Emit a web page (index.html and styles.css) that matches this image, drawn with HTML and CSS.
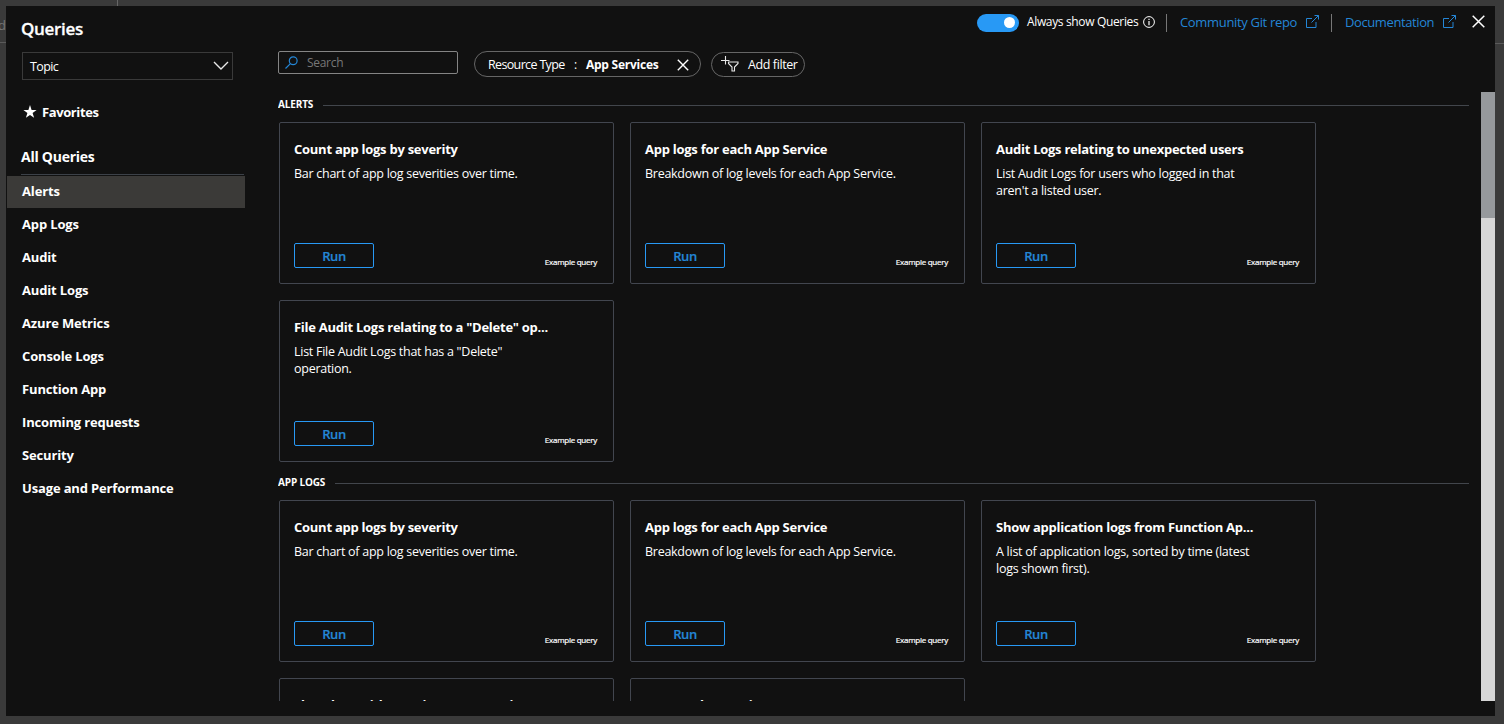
FILE: index.html
```html
<!DOCTYPE html>
<html lang="en">
<head>
<meta charset="utf-8">
<title>Queries</title>
<link rel="stylesheet" href="styles.css">
</head>
<body>
<div class="backdrop"><i class="tab-edge"></i><span class="behind-text">dr</span><i class="behind-line left"></i><i class="behind-line right"></i></div>
<div class="panel">
  <aside class="sidebar">
    <h1 class="title">Queries</h1>
    <div class="select"><span>Topic</span><svg width="16" height="10" viewBox="0 0 16 10"><path d="M1 1l7 7 7-7" fill="none" stroke="#e8e8e8" stroke-width="1.4"/></svg></div>
    <div class="favorites"><svg width="14" height="14" viewBox="0 0 14 14"><path d="M7 0l1.600 4.900h5l-4 3 1.500 4.900L7 9.900l-4.100 2.900 1.500-4.900-4-3h5z" fill="#fff"/></svg><span>Favorites</span></div>
    <h2 class="all">All Queries</h2>
    <nav class="nav">
      <a class="item active">Alerts</a>
      <a class="item">App Logs</a>
      <a class="item">Audit</a>
      <a class="item">Audit Logs</a>
      <a class="item">Azure Metrics</a>
      <a class="item">Console Logs</a>
      <a class="item">Function App</a>
      <a class="item">Incoming requests</a>
      <a class="item">Security</a>
      <a class="item">Usage and Performance</a>
    </nav>
  </aside>
  <main class="main">
    <header class="topbar">
      <span class="toggle"><i></i></span>
      <span class="toggle-label">Always show Queries</span>
      <svg class="info" width="12" height="12" viewBox="0 0 12 12"><circle cx="6" cy="6" r="5.400" fill="none" stroke="#fff"/><path d="M6 2.700v1.200M6 4.900v4.300" stroke="#fff" stroke-width="1.200"/></svg>
      <i class="sep first"></i>
      <a class="link git">Community Git repo</a>
      <svg class="ext" width="13" height="13" viewBox="0 0 13 13"><path d="M6 3.500H.5v9h9.500V7M5.500 7.500l7-7M8.500 .5h4v4" fill="none" stroke="#2486d6"/></svg>
      <i class="sep second"></i>
      <a class="link docs">Documentation</a>
      <svg class="ext" width="13" height="13" viewBox="0 0 13 13"><path d="M6 3.500H.5v9h9.500V7M5.500 7.500l7-7M8.500 .5h4v4" fill="none" stroke="#2486d6"/></svg>
      <svg class="close" width="13" height="13" viewBox="0 0 13 13"><path d="M.7.7l11.600 11.600M12.300.7L.7 12.300" stroke="#fff" stroke-width="1.500"/></svg>
    </header>
    <div class="filters">
      <div class="search"><svg width="13" height="13" viewBox="0 0 13 13"><circle cx="8.200" cy="4.800" r="3.900" fill="none" stroke="#2486d6" stroke-width="1.200"/><path d="M5.400 7.600L.5 12.500" stroke="#2486d6" stroke-width="1.200"/></svg><span>Search</span></div>
      <div class="pill type"><span class="k">Resource Type</span><span class="colon">:</span><b>App Services</b><svg width="12" height="12" viewBox="0 0 12 12"><path d="M.8.8l10.400 10.400M11.200.8L.8 11.200" stroke="#fff" stroke-width="1.400"/></svg></div>
      <div class="pill add"><svg width="18" height="16" viewBox="0 0 18 16"><path d="M4.500 0v8.500M0 4.500h8.500M7.500 6h9.500v1.500l-3.500 3.500v4h-2.500v-4L7.500 7.500z" fill="none" stroke="#e8e8e8" stroke-width="1.100"/></svg><span>Add filter</span></div>
    </div>
    <div class="body">
      <div class="list">
        <section class="group">
          <h3 class="head"><span>ALERTS</span></h3>
          <div class="cards">
            <article class="card"><h4>Count app logs by severity</h4><p>Bar chart of app log severities over time.</p><footer><button>Run</button><small>Example query</small></footer></article>
            <article class="card"><h4>App logs for each App Service</h4><p>Breakdown of log levels for each App Service.</p><footer><button>Run</button><small>Example query</small></footer></article>
            <article class="card"><h4>Audit Logs relating to unexpected users</h4><p>List Audit Logs for users who logged in that<br>aren't a listed user.</p><footer><button>Run</button><small>Example query</small></footer></article>
            <article class="card"><h4>File Audit Logs relating to a "Delete" op...</h4><p>List File Audit Logs that has a "Delete"<br>operation.</p><footer><button>Run</button><small>Example query</small></footer></article>
          </div>
        </section>
        <section class="group">
          <h3 class="head"><span>APP LOGS</span></h3>
          <div class="cards">
            <article class="card"><h4>Count app logs by severity</h4><p>Bar chart of app log severities over time.</p><footer><button>Run</button><small>Example query</small></footer></article>
            <article class="card"><h4>App logs for each App Service</h4><p>Breakdown of log levels for each App Service.</p><footer><button>Run</button><small>Example query</small></footer></article>
            <article class="card"><h4>Show application logs from Function Ap...</h4><p>A list of application logs, sorted by time (latest<br>logs shown first).</p><footer><button>Run</button><small>Example query</small></footer></article>
            <article class="card"><h4>Show logs with warnings or exceptions</h4></article>
            <article class="card"><h4>Error and exception count</h4></article>
          </div>
        </section>
      </div>
      <div class="scrollbar"><i class="thumb"></i></div>
    </div>
  </main>
</div>
</body>
</html>
```

FILE: styles.css
```css
* { box-sizing: border-box; margin: 0; padding: 0; }
body { position: relative; width: 1504px; height: 724px; overflow: hidden; padding: 6px 9px 8px 6px; background: #3a3a3a; color: #fff; font: 13px/17px "Open Sans", "Noto Sans", sans-serif; }
svg { display: block; flex: none; }
.backdrop { position: absolute; inset: 0; }
.tab-edge { position: absolute; left: 117px; top: 0; width: 1px; height: 6px; background: #666; }
.behind-text { position: absolute; left: -2px; top: 17px; color: #777; font-size: 13px; }
.behind-line { position: absolute; top: 42px; height: 1px; background: #5a5a5a; }
.left { left: 0; width: 6px; }
.right { right: 0; width: 9px; top: 43px; }
.panel { position: relative; display: flex; width: 1489px; height: 710px; background: #111; overflow: hidden; }

.sidebar { width: 272px; flex: none; white-space: nowrap; }
.title { margin: 10px 0 0 15px; font-size: 17px; line-height: 26px; font-weight: 600; letter-spacing: -.3px; -webkit-text-stroke: .3px; }
.select { display: flex; align-items: center; justify-content: space-between; width: 211px; height: 28px; margin: 10px 0 0 16px; padding: 0 3px 0 7px; border: 1px solid #3a3a3a; font-size: 12.500px; letter-spacing: -.6px; }
.favorites { display: flex; align-items: center; gap: 5px; height: 20px; margin: 22px 0 0 17px; font-weight: 700; letter-spacing: -.4px; }
.favorites svg { margin-top: -1px; }
.all { width: 223px; height: 28px; margin: 25px 0 0 15px; border-bottom: 1px solid #3c4148; font-size: 14px; line-height: 19px; font-weight: 700; letter-spacing: -.25px; }
.nav { display: flex; flex-direction: column; gap: 1px; margin: 1px 0 0 1px; }
.item { width: 238px; height: 32px; padding-left: 15px; font-weight: 700; line-height: 31px; letter-spacing: -.15px; }
.active { background: #3b3a38; }

.main { flex: 1; min-width: 0; white-space: nowrap; }
.topbar { display: flex; align-items: center; justify-content: flex-end; height: 33px; padding-right: 10px; }
.toggle { display: flex; align-items: center; justify-content: flex-end; width: 42px; height: 18px; padding-right: 4px; border-radius: 9px; background: #2899f5; }
.toggle i { width: 11px; height: 11px; border-radius: 50%; background: #fff; }
.toggle-label { width: 113px; margin: -2px 0 0 8px; font-size: 12px; letter-spacing: -.35px; }
.info { margin: -2px 0 0 3px; }
.sep { width: 1px; height: 18px; background: #777; }
.first { margin: 0 13px 0 11px; }
.second { margin: 0 13px 0 12px; }
.link { color: #2486d6; }
.git { width: 117px; margin-right: 9px; letter-spacing: -.33px; }
.docs { width: 89px; margin-right: 9px; letter-spacing: -.4px; }
.ext { margin-top: -2px; }
.close { margin: -2px 0 0 16px; }

.filters { display: flex; height: 53px; padding-top: 12px; }
.search { display: flex; align-items: center; gap: 9px; width: 180px; height: 23px; padding-left: 6px; border: 1px solid #858585; border-radius: 2px; color: #777; font-size: 12px; letter-spacing: -.3px; }
.pill { display: flex; align-items: center; height: 26px; border: 1px solid #666; border-radius: 13px; font-size: 12px; }
.type { width: 227px; margin-left: 16px; padding-left: 13px; line-height: 15px; }
.k { width: 77px; letter-spacing: -.65px; font-size: 12.500px; }
.colon { width: 21px; padding-left: 9px; }
.type b { width: 78px; font-weight: 700; letter-spacing: -.25px; }
.type svg { margin: 2px 0 0 13px; }
.add { width: 94px; height: 25px; margin: 1px 0 0 10px; padding-left: 9px; gap: 9px; font-size: 12.500px; letter-spacing: -.4px; }
.add svg { margin-top: -2px; }

.body { display: flex; justify-content: space-between; height: 609px; overflow: hidden; }
.list { width: 1191px; }
.group { height: 378px; }
.head { display: flex; align-items: center; gap: 10px; height: 26px; font-size: 10px; font-weight: 700; letter-spacing: -.15px; }
.head span { margin-top: -2px; }
.head::after { content: ""; flex: 1; height: 1px; background: #42464c; }
.cards { display: grid; grid-template-columns: repeat(3, 335px); grid-auto-rows: 162px; gap: 16px; margin: 4px 0 0 1px; }
.card { display: flex; flex-direction: column; padding: 17px 16px 15px 14px; border: 1px solid #42464f; border-radius: 2px; }
.card h4 { height: 19px; font-size: 13px; line-height: 19px; font-weight: 700; letter-spacing: -.26px; }
.card p { margin-top: 6px; font-size: 12.500px; line-height: 17px; letter-spacing: -.27px; }
.card footer { display: flex; justify-content: space-between; align-items: flex-start; margin-top: auto; }
.card button { width: 80px; height: 25px; padding-top: 1px; background: none; border: 1px solid #2899f5; border-radius: 2px; color: #2486d6; font: 600 13px/22px "Open Sans", "Noto Sans", sans-serif; letter-spacing: -.4px; -webkit-text-stroke: .2px; }
.card small { margin-top: 13px; font-size: 8px; line-height: 12px; letter-spacing: -.26px; -webkit-text-stroke: .2px; }
.scrollbar { width: 14px; background: #d6d6d6; }
.thumb { display: block; height: 126px; background: #96999c; }
```
